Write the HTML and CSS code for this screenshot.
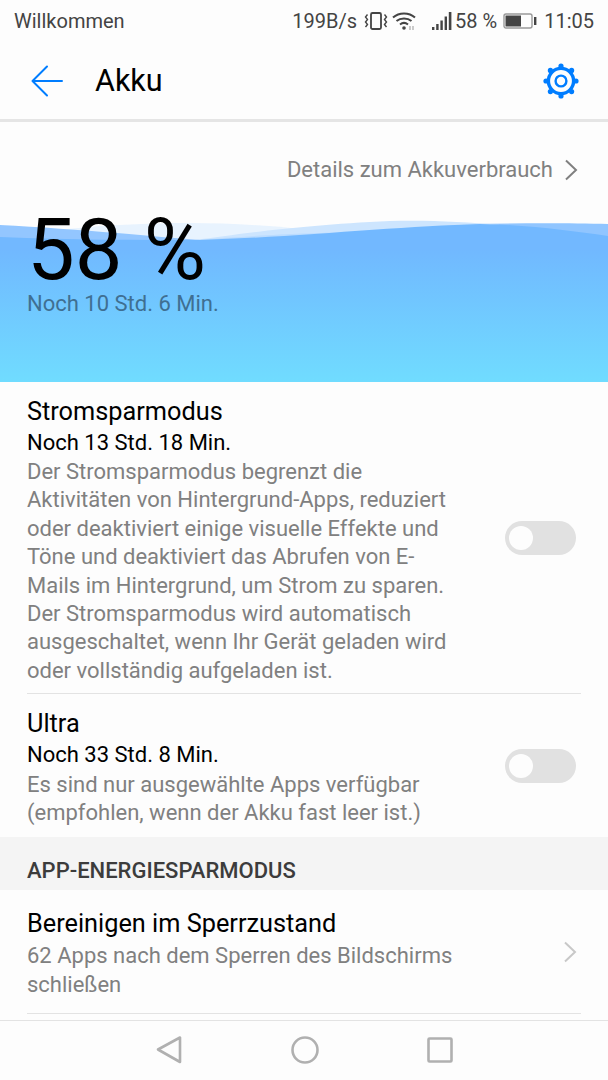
FILE: index.html
```html
<!DOCTYPE html>
<html lang="de">

<head>
    <meta charset="UTF-8">
    <meta name="viewport" content="width=device-width, initial-scale=1.0">
    <title>Akku</title>
    <link rel="stylesheet" href="styles.css">
</head>

<body>
    <div class="screen">
        <div class="status-bar">
            <span class="carrier">Willkommen</span>
            <div class="status-right">
                <span class="speed">199B/s</span>
                <svg class="vibrate-icon" width="24" height="20" viewBox="0 0 24 20" fill="none" stroke="#444">
                    <rect x="7" y="2" width="10" height="16" rx="1.5" stroke-width="1.8"/>
                    <path d="M3.5 3.5 L1.5 6 L3.5 8.5 L1.5 11 L3.5 13.5 L1.5 16 M20.5 3.5 L22.5 6 L20.5 8.5 L22.5 11 L20.5 13.5 L22.5 16" stroke-width="1.4"/>
                </svg>
                <svg class="wifi-icon" width="24" height="20" viewBox="0 0 24 20" fill="none" stroke="#444" stroke-width="2">
                    <path d="M1 6.5 C7 1 17 1 23 6.5"/>
                    <path d="M4.5 10 C8.5 6.5 15.5 6.5 19.5 10"/>
                    <path d="M8 13.5 C10.5 11.5 13.5 11.5 16 13.5"/>
                    <circle cx="12" cy="17" r="1.8" fill="#444" stroke="none"/>
                    <path d="M18 15 V19 M21 15 V19" stroke="#aaa" stroke-width="1.2"/>
                </svg>
                <svg class="signal-icon" width="20" height="20" viewBox="0 0 20 20" fill="#444">
                    <rect x="0" y="16" width="2.4" height="3"/>
                    <rect x="4.2" y="13" width="2.4" height="6"/>
                    <rect x="8.4" y="9.5" width="2.4" height="9.5"/>
                    <rect x="12.6" y="5.5" width="2.4" height="13.5"/>
                    <rect x="16.8" y="1" width="2.6" height="18"/>
                </svg>
                <span class="percent">58 %</span>
                <svg class="battery-icon" width="34" height="18" viewBox="0 0 34 18">
                    <rect x="1" y="2" width="28" height="14" rx="2" fill="none" stroke="#999" stroke-width="1.4"/>
                    <rect x="2.5" y="3.5" width="15.5" height="11" fill="#444"/>
                    <rect x="31" y="5" width="2.4" height="8" fill="#444"/>
                </svg>
                <span class="clock">11:05</span>
            </div>
        </div>

        <header class="app-bar">
            <svg class="back-icon" width="32" height="32" viewBox="0 0 32 32" fill="none" stroke="#007dff" stroke-width="2" stroke-linecap="round" stroke-linejoin="round">
                <path d="M16 1.5 L1.5 16 L16 30.5 M1.5 16 H31"/>
            </svg>
            <h1 class="title">Akku</h1>
            <svg class="gear-icon" width="36" height="36" viewBox="0 0 36 36" fill="none" stroke="#007dff">
                <circle cx="18" cy="18" r="12.6" stroke-width="3.4"/>
                <circle cx="18" cy="18" r="5.4" stroke-width="2.4"/>
                <g fill="#007dff" stroke="none">
                    <circle cx="18" cy="3" r="2.6"/>
                    <circle cx="18" cy="33" r="2.6"/>
                    <circle cx="3" cy="18" r="2.6"/>
                    <circle cx="33" cy="18" r="2.6"/>
                    <circle cx="7.4" cy="7.4" r="2.6"/>
                    <circle cx="28.6" cy="7.4" r="2.6"/>
                    <circle cx="7.4" cy="28.6" r="2.6"/>
                    <circle cx="28.6" cy="28.6" r="2.6"/>
                </g>
            </svg>
        </header>

        <section class="hero">
            <svg class="waves" width="608" height="35" viewBox="0 0 608 35">
                <path d="M470 9 C520 8 570 8 608 9 V35 H470 Z" fill="#90c5ff"/>
                <path d="M60 15 C100 10 150 8 190 8 C240 8 290 12 345 19 V35 H60 Z" fill="#e8f3fe"/>
                <path d="M195 25 C240 19 300 10 390 6 C430 5 465 7 500 10 V35 H195 Z" fill="#cde5fe"/>
                <path d="M195 25 C260 20 330 17 345 18 C400 14 440 11 480 9 V35 H195 Z" fill="#bbdcff"/>
                <path d="M0 10 C40 12 80 15 117 18 C150 21 175 23 200 25 V35 H0 Z" fill="#93c6ff"/>
                <path d="M0 22 C70 25 140 25 200 25 C300 22 400 11 480 9 C530 10 570 16 608 21 V35 H0 Z" fill="#72b8ff"/>
            </svg>
            <a class="details-link">
                <span>Details zum Akkuverbrauch</span>
                <svg width="14" height="22" viewBox="0 0 14 22" fill="none" stroke="#808080" stroke-width="2">
                    <path d="M2 1.5 L12 11 L2 20.5"/>
                </svg>
            </a>
            <div class="charge">58 %</div>
            <div class="remaining">Noch 10 Std. 6 Min.</div>
        </section>

        <main class="settings">
            <div class="row row-power">
                <div class="row-text">
                    <div class="row-title">Stromsparmodus</div>
                    <div class="row-time">Noch 13 Std. 18 Min.</div>
                    <p class="row-desc">Der Stromsparmodus begrenzt die Aktivitäten von Hintergrund-Apps, reduziert oder deaktiviert einige visuelle Effekte und Töne und deaktiviert das Abrufen von E-Mails im Hintergrund, um Strom zu sparen. Der Stromsparmodus wird automatisch ausgeschaltet, wenn Ihr Gerät geladen wird oder vollständig aufgeladen ist.</p>
                </div>
                <div class="switch"><span class="knob"></span></div>
            </div>

            <div class="row row-ultra">
                <div class="row-text">
                    <div class="row-title">Ultra</div>
                    <div class="row-time">Noch 33 Std. 8 Min.</div>
                    <p class="row-desc">Es sind nur ausgewählte Apps verfügbar (empfohlen, wenn der Akku fast leer ist.)</p>
                </div>
                <div class="switch"><span class="knob"></span></div>
            </div>

            <div class="section-head">APP-ENERGIESPARMODUS</div>

            <div class="row row-clean">
                <div class="row-text">
                    <div class="row-title">Bereinigen im Sperrzustand</div>
                    <p class="row-desc">62 Apps nach dem Sperren des Bildschirms schließen</p>
                </div>
                <svg class="row-chevron" width="14" height="22" viewBox="0 0 14 22" fill="none" stroke="#c8c8c8" stroke-width="2">
                    <path d="M2 1.5 L12 11 L2 20.5"/>
                </svg>
            </div>
        </main>

        <nav class="nav-bar">
            <svg width="28" height="30" viewBox="0 0 28 30" fill="none" stroke="#b0b0b0" stroke-width="2.6" stroke-linejoin="round">
                <path d="M25 2.5 V27 L3 14.5 Z"/>
            </svg>
            <svg width="30" height="30" viewBox="0 0 30 30" fill="none" stroke="#b0b0b0" stroke-width="2.6">
                <circle cx="15" cy="15" r="12.5"/>
            </svg>
            <svg width="28" height="28" viewBox="0 0 28 28" fill="none" stroke="#b0b0b0" stroke-width="2.6" stroke-linejoin="round">
                <rect x="2.5" y="2.5" width="23" height="23" rx="1"/>
            </svg>
        </nav>
    </div>
</body>

</html>
```

FILE: styles.css
```css
* {
    box-sizing: border-box;
}

body {
    margin: 0;
    padding: 0;
    font-family: Roboto, "Liberation Sans", sans-serif;
    background-color: #fdfdfd;
}

.screen {
    display: flex;
    flex-direction: column;
    width: 608px;
    height: 1080px;
    overflow: hidden;
    background-color: #fdfdfd;
}

/* status bar */
.status-bar {
    display: flex;
    justify-content: space-between;
    align-items: center;
    height: 42px;
    padding: 0 14px;
    font-size: 20px;
    color: #444;
}

.status-right {
    display: flex;
    align-items: center;
}

.vibrate-icon {
    margin-left: 7px;
}

.wifi-icon {
    margin-left: 4px;
}

.signal-icon {
    margin-left: 16px;
}

.percent {
    margin-left: 3px;
}

.battery-icon {
    margin-left: 6px;
}

.clock {
    margin-left: 7px;
}

/* app bar */
.app-bar {
    display: flex;
    align-items: center;
    height: 80px;
    padding: 0 29px 0 31px;
    border-bottom: 3px solid #e5e5e5;
}

.title {
    flex: 1;
    margin: 0 0 0 32px;
    font-size: 30.5px;
    font-weight: 400;
    color: #000;
}

/* battery hero */
.hero {
    position: relative;
    height: 260px;
    padding: 35px 30px 0 27px;
    background: linear-gradient(to bottom, #fdfdfd 0, #fdfdfd 123px, #71b7ff 123px, #70dcff 100%);
}

.waves {
    position: absolute;
    left: 0;
    top: 93px;
}

.details-link {
    position: relative;
    display: flex;
    justify-content: flex-end;
    align-items: center;
    gap: 11px;
    font-size: 22px;
    color: #808080;
}

.charge {
    position: relative;
    margin-top: 28px;
    font-size: 85px;
    line-height: 80px;
    color: #000;
}

.remaining {
    position: relative;
    margin-top: 1px;
    font-size: 22px;
    line-height: 26px;
    color: #3f6f92;
}

/* settings list */
.settings {
    flex: 1;
    min-height: 0;
}

.row {
    display: flex;
    justify-content: space-between;
    align-items: center;
    margin: 0 27px;
}

.row-text {
    width: 430px;
}

.row-power {
    height: 312px;
    padding-top: 6px;
    border-bottom: 1px solid #e3e3e3;
}

.row-power .switch {
    margin-bottom: 6px;
}

.row-ultra {
    height: 143px;
    padding-top: 4px;
}

.row-ultra .switch {
    margin-bottom: 4px;
}

.row-ultra .row-desc {
    margin-top: 1px;
}

.row-clean {
    height: 124px;
    padding-top: 4px;
    border-bottom: 1px solid #e3e3e3;
}

.row-clean .row-desc {
    margin-top: 2px;
}

.row-clean .row-chevron {
    margin-bottom: 4px;
}

.row-title {
    font-size: 25.3px;
    line-height: 32px;
    color: #000;
}

.row-time {
    font-size: 22px;
    line-height: 30px;
    color: #000;
}

.row-desc {
    margin: 0;
    font-size: 22px;
    line-height: 28.4px;
    color: #808080;
}

.switch {
    display: flex;
    align-items: center;
    width: 71px;
    height: 34px;
    margin-right: 5px;
    padding: 0 4px;
    border-radius: 17px;
    background-color: #e1e1e1;
}

.knob {
    width: 24px;
    height: 24px;
    border-radius: 50%;
    background-color: #fdfdfd;
}

.row-chevron {
    margin-right: 4px;
}

.section-head {
    display: flex;
    align-items: center;
    height: 53px;
    padding: 14px 27px 0 27px;
    font-size: 22px;
    font-weight: 500;
    color: #3c3c3c;
    background-color: #f4f4f4;
}

/* nav bar */
.nav-bar {
    display: flex;
    justify-content: space-between;
    align-items: center;
    height: 60px;
    padding: 0 154px 2px 155px;
    border-top: 1px solid #e3e3e3;
}
```
